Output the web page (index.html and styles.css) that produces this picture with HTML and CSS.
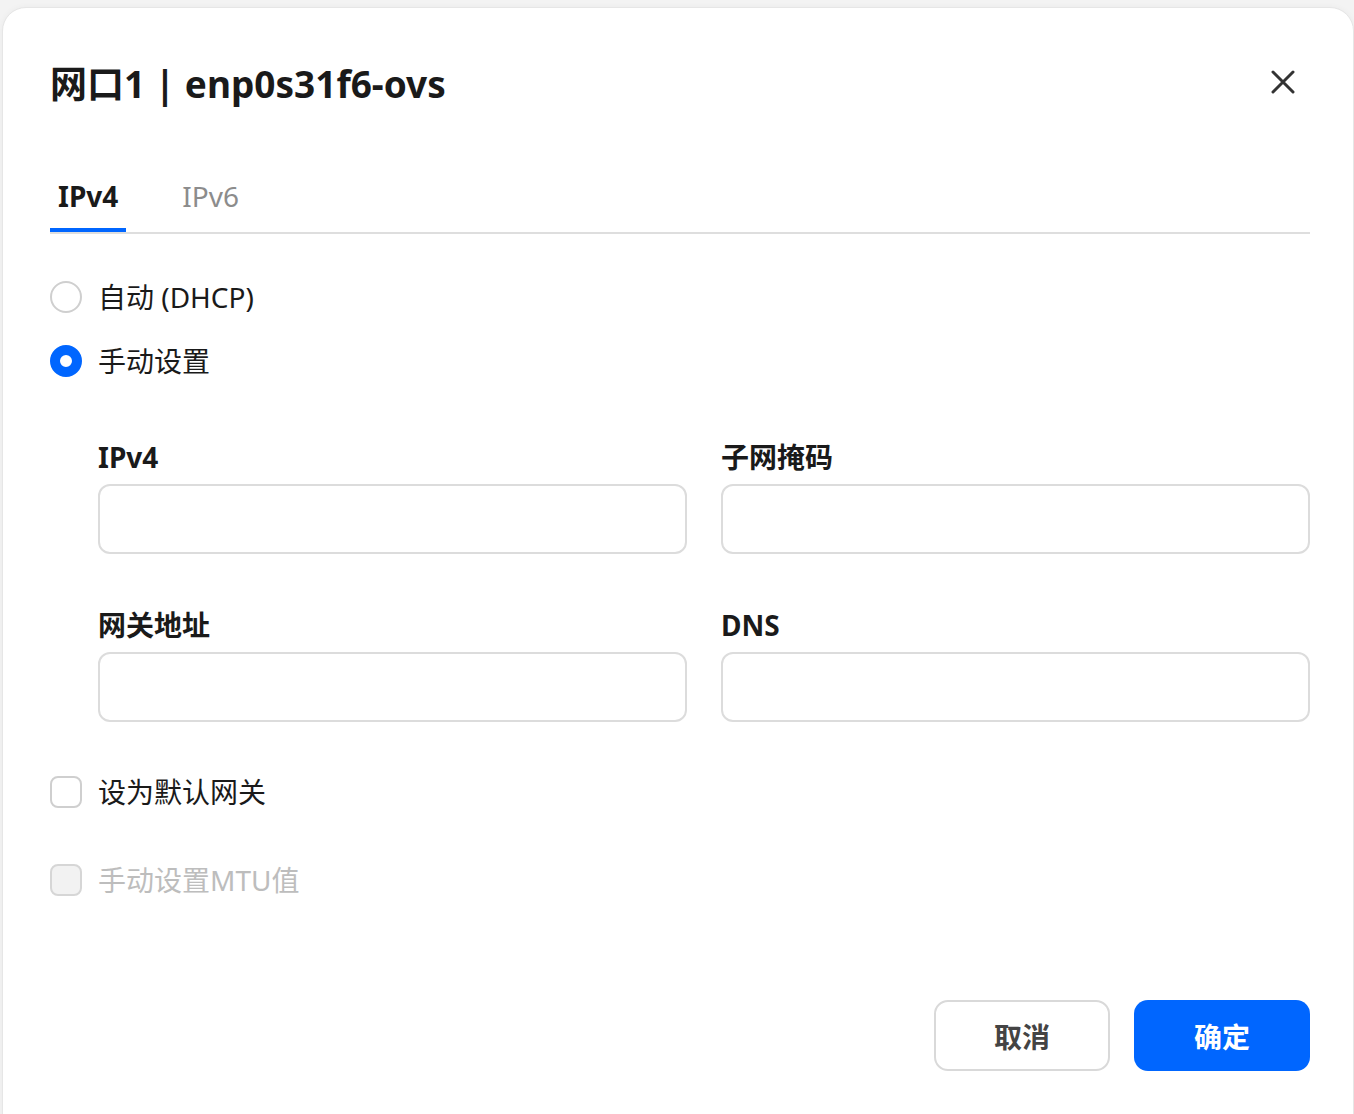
FILE: index.html
```html
<!DOCTYPE html>
<html lang="zh-CN">
<head>
    <meta charset="UTF-8">
    <meta name="viewport" content="width=device-width, initial-scale=1.0">
    <title>网口设置</title>
    <link rel="stylesheet" href="styles.css">
</head>
<body>
    <div class="dialog">
        <div class="dialog-header">
            <h1>网口1 | enp0s31f6-ovs</h1>
            <button class="close-btn" aria-label="关闭">
                <svg width="24" height="24" viewBox="0 0 24 24">
                    <path d="M2 2 L22 22 M22 2 L2 22" stroke="#333" stroke-width="3" stroke-linecap="round" fill="none"/>
                </svg>
            </button>
        </div>

        <div class="tabs">
            <div class="tab active">IPv4</div>
            <div class="tab">IPv6</div>
        </div>

        <div class="radio-group">
            <label class="radio">
                <span class="radio-mark"></span>
                <span>自动 (DHCP)</span>
            </label>
            <label class="radio checked">
                <span class="radio-mark"></span>
                <span>手动设置</span>
            </label>
        </div>

        <div class="fields">
            <div class="field">
                <div class="field-label">IPv4</div>
                <input type="text" class="field-input">
            </div>
            <div class="field">
                <div class="field-label">子网掩码</div>
                <input type="text" class="field-input">
            </div>
            <div class="field">
                <div class="field-label">网关地址</div>
                <input type="text" class="field-input">
            </div>
            <div class="field">
                <div class="field-label">DNS</div>
                <input type="text" class="field-input">
            </div>
        </div>

        <label class="check">
            <span class="check-mark"></span>
            <span>设为默认网关</span>
        </label>
        <label class="check disabled">
            <span class="check-mark"></span>
            <span>手动设置MTU值</span>
        </label>

        <div class="footer">
            <button class="btn cancel">取消</button>
            <button class="btn confirm">确定</button>
        </div>
    </div>
</body>
</html>
```

FILE: styles.css
```css
body {
    margin: 0;
    background-color: #f3f3f3;
    font-family: "Noto Sans", "Noto Sans CJK SC", sans-serif;
    color: #1a1a1a;
    height: 1114px;
    overflow: hidden;
}

.dialog {
    margin: 7px 0 0 2px;
    width: 1352px;
    height: 1140px;
    box-sizing: border-box;
    background-color: #fff;
    border-radius: 24px;
    border: 1px solid #e6e6e6;
    box-shadow: 0 0 6px rgba(0, 0, 0, 0.04);
    padding: 0 43px 0 47px;
}

.dialog-header {
    display: flex;
    align-items: center;
    justify-content: space-between;
    height: 56px;
    margin-top: 46px;
}

.dialog-header h1 {
    margin: 0;
    font-size: 37px;
    font-weight: 700;
    font-family: "Noto Sans", "Noto Sans CJK SC", sans-serif;
}

.close-btn {
    background: none;
    border: none;
    padding: 0;
    margin-right: 15px;
    width: 24px;
    height: 24px;
    cursor: pointer;
}

.tabs {
    display: flex;
    gap: 48px;
    margin-top: 68px;
    border-bottom: 2px solid #dedede;
}

.tab {
    font-size: 28px;
    color: #8c8c8c;
    line-height: 36px;
    padding: 0 8px 18px;
}

.tab.active {
    color: #1a1a1a;
    font-weight: 700;
    border-bottom: 4px solid #0066ff;
    padding-bottom: 14px;
}

.radio-group {
    display: flex;
    flex-direction: column;
    gap: 32px;
    margin-top: 47px;
}

.radio, .check {
    display: flex;
    align-items: center;
    gap: 16px;
    font-size: 28px;
    line-height: 32px;
    color: #1a1a1a;
}

.radio-mark {
    width: 32px;
    height: 32px;
    box-sizing: border-box;
    border: 2px solid #cfcfcf;
    border-radius: 50%;
}

.radio.checked .radio-mark {
    border: 10px solid #0066ff;
    background-color: #fff;
}

.fields {
    display: grid;
    grid-template-columns: 1fr 1fr;
    column-gap: 34px;
    row-gap: 53px;
    margin: 62px 0 0 48px;
}

.field-label {
    font-size: 28px;
    font-weight: 700;
    line-height: 36px;
    margin-bottom: 9px;
}

.field-input {
    display: block;
    width: 100%;
    height: 70px;
    box-sizing: border-box;
    border: 2px solid #dcdcdc;
    border-radius: 12px;
    outline: none;
    font-size: 24px;
    padding: 0 16px;
}

.check {
    margin-top: 54px;
}

.check-mark {
    width: 32px;
    height: 32px;
    box-sizing: border-box;
    border: 2px solid #cfcfcf;
    border-radius: 8px;
}

.check.disabled {
    margin-top: 56px;
    color: #bdbdbd;
}

.check.disabled .check-mark {
    background-color: #f2f2f2;
    border-color: #d6d6d6;
}

.footer {
    display: flex;
    justify-content: flex-end;
    gap: 24px;
    margin-top: 104px;
}

.btn {
    width: 176px;
    height: 71px;
    border-radius: 14px;
    font-size: 28px;
    font-weight: 700;
    font-family: "Noto Sans CJK SC", sans-serif;
    cursor: pointer;
}

.cancel {
    background-color: #fff;
    border: 2px solid #d9d9d9;
    color: #444;
}

.confirm {
    background-color: #0066ff;
    border: none;
    color: #fff;
}
```
